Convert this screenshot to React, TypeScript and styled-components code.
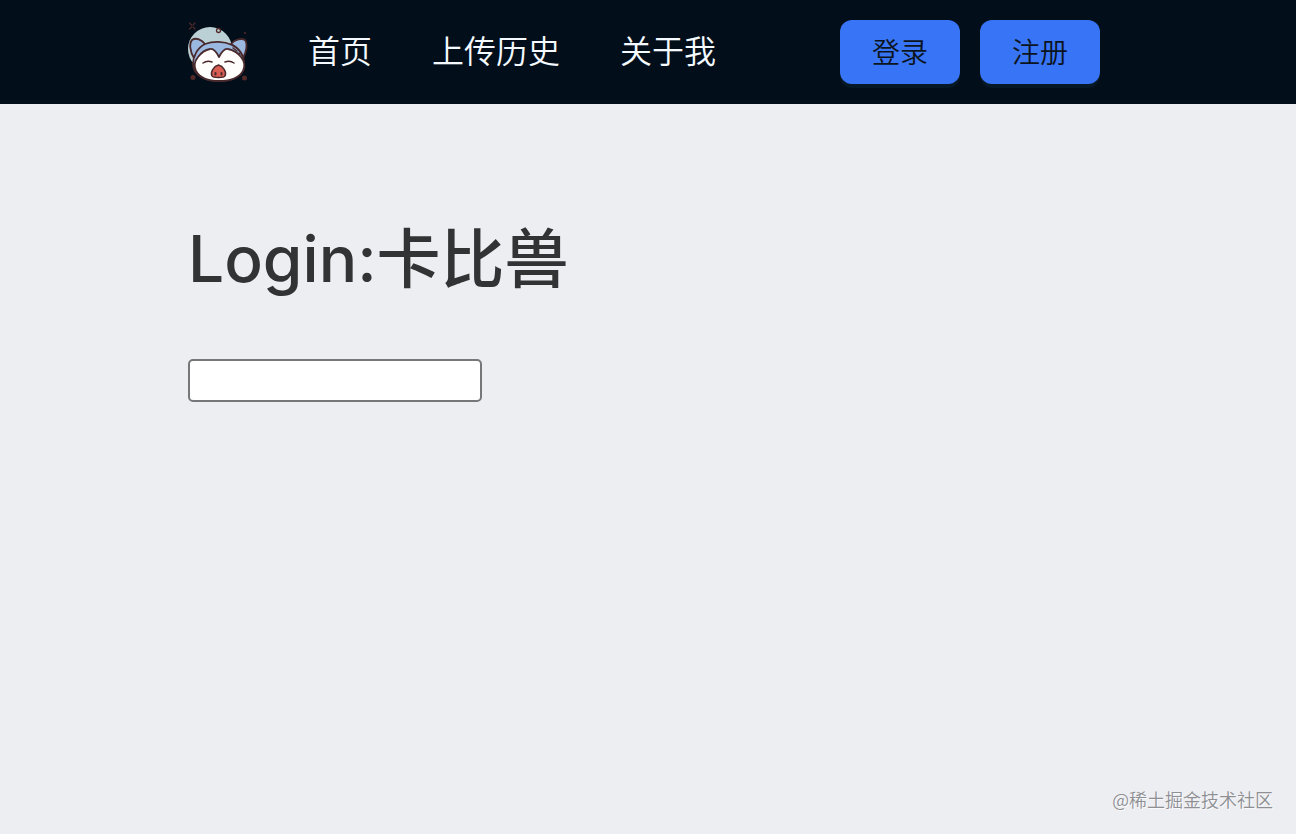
import React from "react";
import styled, { createGlobalStyle } from "styled-components";

const GlobalStyle = createGlobalStyle`
  *, *::before, *::after { box-sizing: border-box; }
  body {
    margin: 0;
    background: #edeef2;
    color: #323335;
    font-family: Inter, "Noto Sans CJK SC", sans-serif;
  }
`;

const Page = styled.div`
  min-height: 100vh;
  display: flex;
  flex-direction: column;
`;

const Header = styled.header`
  background: #020f1b;
`;

const Bar = styled.div`
  max-width: 920px;
  height: 104px;
  margin: 0 auto;
  padding-right: 8px;
  display: flex;
  align-items: center;
`;

const LogoLink = styled.a`
  display: block;
  width: 60px;
  height: 60px;
`;

const Nav = styled.nav`
  display: flex;
  gap: 60px;
  margin-left: 60px;
`;

const NavLink = styled.a`
  color: #f4faff;
  font-size: 32px;
  font-weight: 350;
  line-height: 48px;
  text-decoration: none;
  white-space: nowrap;
`;

const Actions = styled.div`
  display: flex;
  gap: 20px;
  margin-left: auto;
`;

const ActionButton = styled.button`
  width: 120px;
  height: 64px;
  padding: 2px 0 0;
  border: 0;
  border-radius: 12px;
  background: #3875f6;
  box-shadow: 0 4px 0 #061825;
  color: #0c1420;
  font-family: inherit;
  font-size: 28px;
  font-weight: 350;
  line-height: 40px;
  cursor: pointer;
`;

const Main = styled.main`
  flex: 1;
  width: 100%;
  max-width: 920px;
  margin: 0 auto;
  padding-top: 107px;
`;

const Title = styled.h1`
  margin: 0 0 52px;
  font-size: 64px;
  line-height: 96px;
  font-weight: 500;
`;

const TextInput = styled.input`
  display: block;
  width: 294px;
  height: 43px;
  padding: 2px 4px;
  border: 2px solid #767779;
  border-radius: 5px;
  background: #fff;
  font-family: inherit;
  font-size: 26px;
`;

const Credit = styled.footer`
  padding: 0 23px 21px;
  text-align: right;
  font-family: "Noto Sans CJK SC", sans-serif;
  font-size: 18px;
  font-weight: 350;
  line-height: 28px;
  color: #8e8f92;
  text-shadow: 1px 1px 0 #fafafc;
`;

function Logo() {
  return (
    <svg viewBox="0 0 60 60" width="60" height="60" aria-hidden="true">
      <circle cx="22" cy="27" r="22" fill="#bbd0d4" />
      <g fill="none" stroke="#542a29" strokeLinecap="round">
        <path d="M1.500 1l2 2M7 1L5 3M1.500 7l2-2M7 7L5 5" strokeWidth="1.200" />
        <circle cx="30.500" cy="8.500" r="2" strokeWidth="1.300" />
      </g>
      <g fill="#542a29">
        <circle cx="57" cy="11" r="1" />
        <circle cx="5" cy="55.500" r="2.500" />
        <circle cx="56.500" cy="56" r="2.500" />
      </g>
      <g stroke="#48292c" strokeWidth="1.800" strokeLinejoin="round" strokeLinecap="round">
        <path d="M6 36C2 30 1 21 4 18C8 15 14 18 17 22C14 26 10 29 6 36ZM43 22C47 17 54 16 57 18C60 22 58 31 55 36C53 29 49 25 43 22Z" fill="#9bb8e0" />
        <path d="M17 22C25 19 36 19 44 23C52 27 56 34 56 42C57 53 45 59 31 59C17 59 5 53 5 42C5 35 9 26 17 22Z" fill="#9bb8e0" />
        <path d="M31 35C29 31 26 26 22 27C17 28 13 31 10 35C6 40 6 45 8 49C12 56 21 59 31 59C42 59 51 56 55 49C57 45 57 40 53 35C50 31 45 28 40 27C36 26 33 31 31 35Z" fill="#fffdfb" />
        <path d="M15 41C18 39 21 39 24 40M37 40C40 39 43 39 46 41" fill="none" strokeWidth="1.500" />
        <path d="M30.500 43C26 44 22 50 24 54C25 56 36 56 37 54C39 50 35 44 30.500 43Z" fill="#d85d52" strokeWidth="1.500" />
        <path d="M27.500 51v1.500M33.500 51v1.500" strokeWidth="2" />
      </g>
      <path d="M45 26l4 3M51 31l1 1" stroke="#48292c" strokeWidth="1.400" strokeLinecap="round" />
    </svg>
  );
}

const links = ["首页", "上传历史", "关于我"];

export default function App() {
  return (
    <Page>
      <GlobalStyle />
      <Header>
        <Bar>
          <LogoLink href="#" aria-label="首页">
            <Logo />
          </LogoLink>
          <Nav>
            {links.map((label) => (
              <NavLink href="#" key={label}>
                {label}
              </NavLink>
            ))}
          </Nav>
          <Actions>
            <ActionButton type="button">登录</ActionButton>
            <ActionButton type="button">注册</ActionButton>
          </Actions>
        </Bar>
      </Header>
      <Main>
        <Title id="login-title">Login:卡比兽</Title>
        <TextInput type="text" aria-labelledby="login-title" />
      </Main>
      <Credit>@稀土掘金技术社区</Credit>
    </Page>
  );
}
